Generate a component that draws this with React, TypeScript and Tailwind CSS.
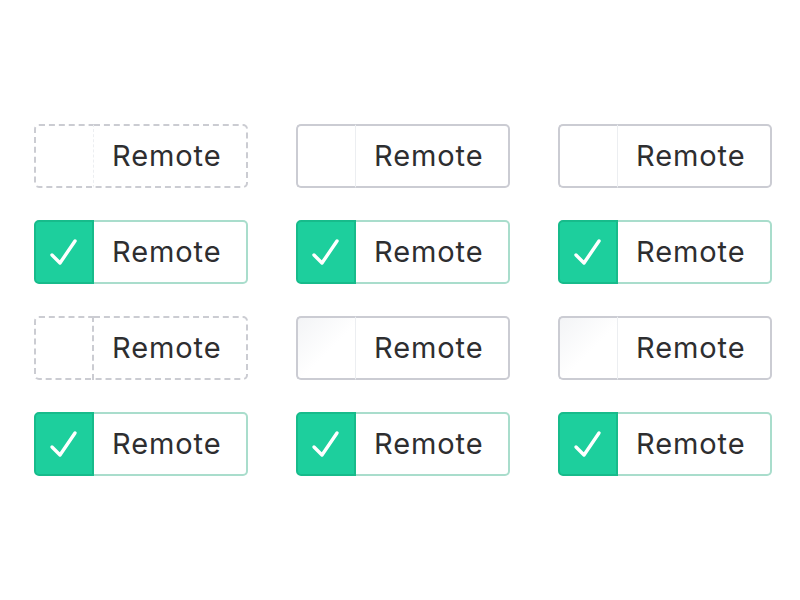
import React from 'react';

type Variant = 'dashed' | 'solid' | 'shaded';

function Check() {
  return (
    <svg width="30" height="30" viewBox="0 0 30 30" fill="none">
      <path
        d="M3 18 L11 26 L26 4"
        stroke="white"
        strokeWidth="3.4"
        strokeLinecap="round"
        strokeLinejoin="round"
      />
    </svg>
  );
}

function Label() {
  return <span className="text-[29px] tracking-[0.9px] text-[#2e2e30]">Remote</span>;
}

function Toggle({ variant, checked, dashedDivider }: { variant: Variant; checked: boolean; dashedDivider?: boolean }) {
  if (checked) {
    return (
      <div className="flex h-[64px] w-[214px]">
        <div className="flex w-[60px] items-center justify-center rounded-l-[5px] border-2 border-[#17bb8b] bg-[#1dcf9d]">
          <Check />
        </div>
        <div className="flex flex-1 items-center rounded-r-[5px] border-y-2 border-r-2 border-[#a9ddcc] bg-white pl-[18px]">
          <Label />
        </div>
      </div>
    );
  }

  const dashed = variant === 'dashed';
  const edge = dashed ? 'border-dashed border-[#cbccd2]' : 'border-solid border-[#cbccd3]';
  const divider = dashedDivider
    ? 'border-r-2 border-r-[#cbccd2] border-r-dashed'
    : 'border-r border-r-[#eceef1]';
  const fill =
    variant === 'shaded'
      ? 'bg-[linear-gradient(135deg,#f3f4f6_0%,#ffffff_55%)]'
      : 'bg-white';

  return (
    <div className="flex h-[64px] w-[214px]">
      <div className={`w-[60px] rounded-l-[5px] border-y-2 border-l-2 ${edge} ${fill} ${divider}`} />
      <div className={`flex flex-1 items-center rounded-r-[5px] border-y-2 border-r-2 ${edge} bg-white pl-[18px]`}>
        <Label />
      </div>
    </div>
  );
}

export default function App() {
  const rows: { variant: Variant; checked: boolean; dashedDivider?: boolean }[][] = [
    [
      { variant: 'dashed', checked: false },
      { variant: 'solid', checked: false },
      { variant: 'solid', checked: false },
    ],
    [
      { variant: 'solid', checked: true },
      { variant: 'solid', checked: true },
      { variant: 'solid', checked: true },
    ],
    [
      { variant: 'dashed', checked: false, dashedDivider: true },
      { variant: 'shaded', checked: false },
      { variant: 'shaded', checked: false },
    ],
    [
      { variant: 'solid', checked: true },
      { variant: 'solid', checked: true },
      { variant: 'solid', checked: true },
    ],
  ];

  return (
    <div
      className="h-[600px] w-[800px] bg-white pl-[34px] pt-[124px]"
      style={{ fontFamily: 'Inter, "Open Sans", sans-serif' }}
    >
      <div className="grid grid-cols-[214px_214px_214px] gap-x-[48px] gap-y-[32px]">
        {rows.flat().map((t, i) => (
          <Toggle key={i} {...t} />
        ))}
      </div>
    </div>
  );
}
